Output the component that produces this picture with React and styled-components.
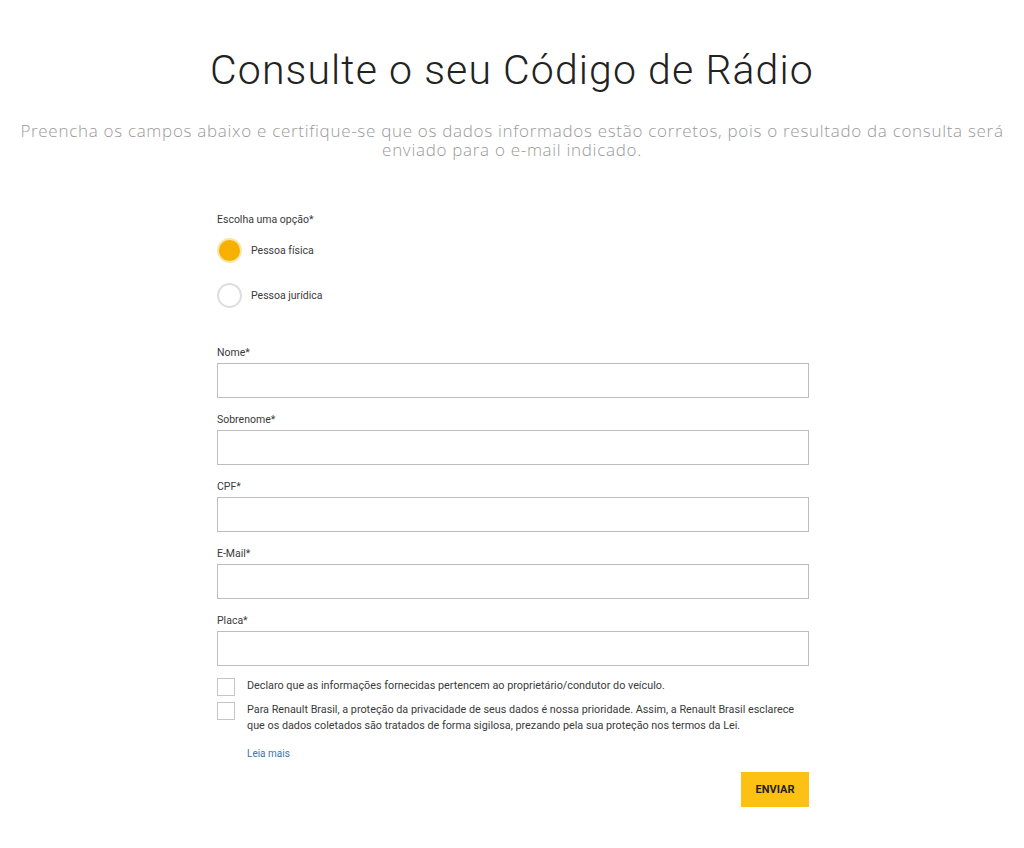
import styled, { createGlobalStyle } from 'styled-components'
import { useState } from 'react'

const GlobalStyle = createGlobalStyle`
  body {
    margin: 0;
    background: #fff;
    font-family: Roboto, "Liberation Sans", sans-serif;
    color: #333;
  }
  * { box-sizing: border-box; }
`

const fields = ['Nome*', 'Sobrenome*', 'CPF*', 'E-Mail*', 'Placa*']

const App = () => {
  const [person, setPerson] = useState('fisica')
  const [checks, setChecks] = useState([false, false])

  const toggle = (idx) => {
    const next = [...checks]
    next[idx] = !next[idx]
    setChecks(next)
  }

  return (
    <Page>
      <GlobalStyle />
      <Title>Consulte o seu Código de Rádio</Title>
      <Subtitle>
        Preencha os campos abaixo e certifique-se que os dados informados estão corretos, pois o
        resultado da consulta será
        <br />
        enviado para o e-mail indicado.
      </Subtitle>
      <Form onSubmit={(e) => e.preventDefault()}>
        <SmallLabel>Escolha uma opção*</SmallLabel>
        <RadioGroup>
          <RadioRow onClick={() => setPerson('fisica')}>
            <Radio active={person === 'fisica'} />
            <RadioText>Pessoa física</RadioText>
          </RadioRow>
          <RadioRow onClick={() => setPerson('juridica')}>
            <Radio active={person === 'juridica'} />
            <RadioText>Pessoa jurídica</RadioText>
          </RadioRow>
        </RadioGroup>
        <Fields>
          {fields.map((name) => (
            <Field key={name}>
              <SmallLabel>{name}</SmallLabel>
              <Input />
            </Field>
          ))}
        </Fields>
        <Checks>
          <CheckRow>
            <Box checked={checks[0]} onClick={() => toggle(0)} />
            <CheckText>
              Declaro que as informações fornecidas pertencem ao proprietário/condutor do veículo.
            </CheckText>
          </CheckRow>
          <CheckRow>
            <Box checked={checks[1]} onClick={() => toggle(1)} />
            <CheckText>
              Para Renault Brasil, a proteção da privacidade de seus dados é nossa prioridade.
              Assim, a Renault Brasil esclarece que os dados coletados são tratados de forma
              sigilosa, prezando pela sua proteção nos termos da Lei.
            </CheckText>
          </CheckRow>
        </Checks>
        <ReadMore href="#">Leia mais</ReadMore>
        <Actions>
          <SendBtn type="submit">ENVIAR</SendBtn>
        </Actions>
      </Form>
    </Page>
  )
}

const Page = styled.main`
  display: flex;
  flex-direction: column;
  align-items: center;
  padding: 44px 10px 40px;
`

const Title = styled.h1`
  margin: 0;
  font-size: 41px;
  font-weight: 300;
  line-height: 52px;
  color: #222;
  letter-spacing: 1.1px;
`

const Subtitle = styled.p`
  margin: 25px 0 0;
  font-family: "Open Sans", Roboto, sans-serif;
  font-size: 17px;
  font-weight: 300;
  line-height: 19px;
  letter-spacing: 0.7px;
  color: #9a9a9a;
  text-align: center;
  white-space: nowrap;
`

const Form = styled.form`
  width: 592px;
  margin: 54px 0 0 2px;
  display: flex;
  flex-direction: column;
`

const SmallLabel = styled.div`
  font-size: 10.5px;
  line-height: 14px;
  color: #3a3a3a;
`

const RadioGroup = styled.div`
  display: flex;
  flex-direction: column;
  gap: 20px;
  margin-top: 11px;
`

const RadioRow = styled.label`
  display: flex;
  align-items: center;
  gap: 9px;
  cursor: pointer;
`

const Radio = styled.span`
  width: 25px;
  height: 25px;
  border-radius: 50%;
  border: 2px solid ${({ active }) => (active ? '#f5e7a8' : '#dedede')};
  background: ${({ active }) => (active ? '#f8b000' : '#fff')};
`

const RadioText = styled.span`
  font-size: 10.5px;
  color: #3a3a3a;
`

const Fields = styled.div`
  display: flex;
  flex-direction: column;
  gap: 15px;
  margin-top: 38px;
`

const Field = styled.div`
  display: flex;
  flex-direction: column;
  gap: 3px;
`

const Input = styled.input`
  width: 100%;
  height: 35px;
  border: 1px solid #bdbdbd;
  border-radius: 0;
  padding: 0 10px;
  font-size: 12px;
  outline: none;
`

const Checks = styled.div`
  display: flex;
  flex-direction: column;
  gap: 6px;
  margin-top: 12px;
`

const CheckRow = styled.div`
  display: flex;
  align-items: flex-start;
  gap: 12px;
`

const Box = styled.span`
  flex: none;
  width: 18px;
  height: 18px;
  border: 1px solid #c4c4c4;
  background: ${({ checked }) => (checked ? '#f8b000' : '#fff')};
  cursor: pointer;
`

const CheckText = styled.p`
  margin: 0;
  width: 565px;
  font-size: 10.8px;
  line-height: 16px;
  color: #3a3a3a;
`

const ReadMore = styled.a`
  margin: 14px 0 0 30px;
  font-size: 10px;
  color: #3a78a8;
  text-decoration: none;
`

const Actions = styled.div`
  display: flex;
  justify-content: flex-end;
  margin-top: 13px;
`

const SendBtn = styled.button`
  width: 68px;
  height: 35px;
  border: none;
  background: #fdc114;
  font-family: Roboto, "Liberation Sans", sans-serif;
  font-size: 11px;
  font-weight: 700;
  color: #222;
  cursor: pointer;
`

export default App
